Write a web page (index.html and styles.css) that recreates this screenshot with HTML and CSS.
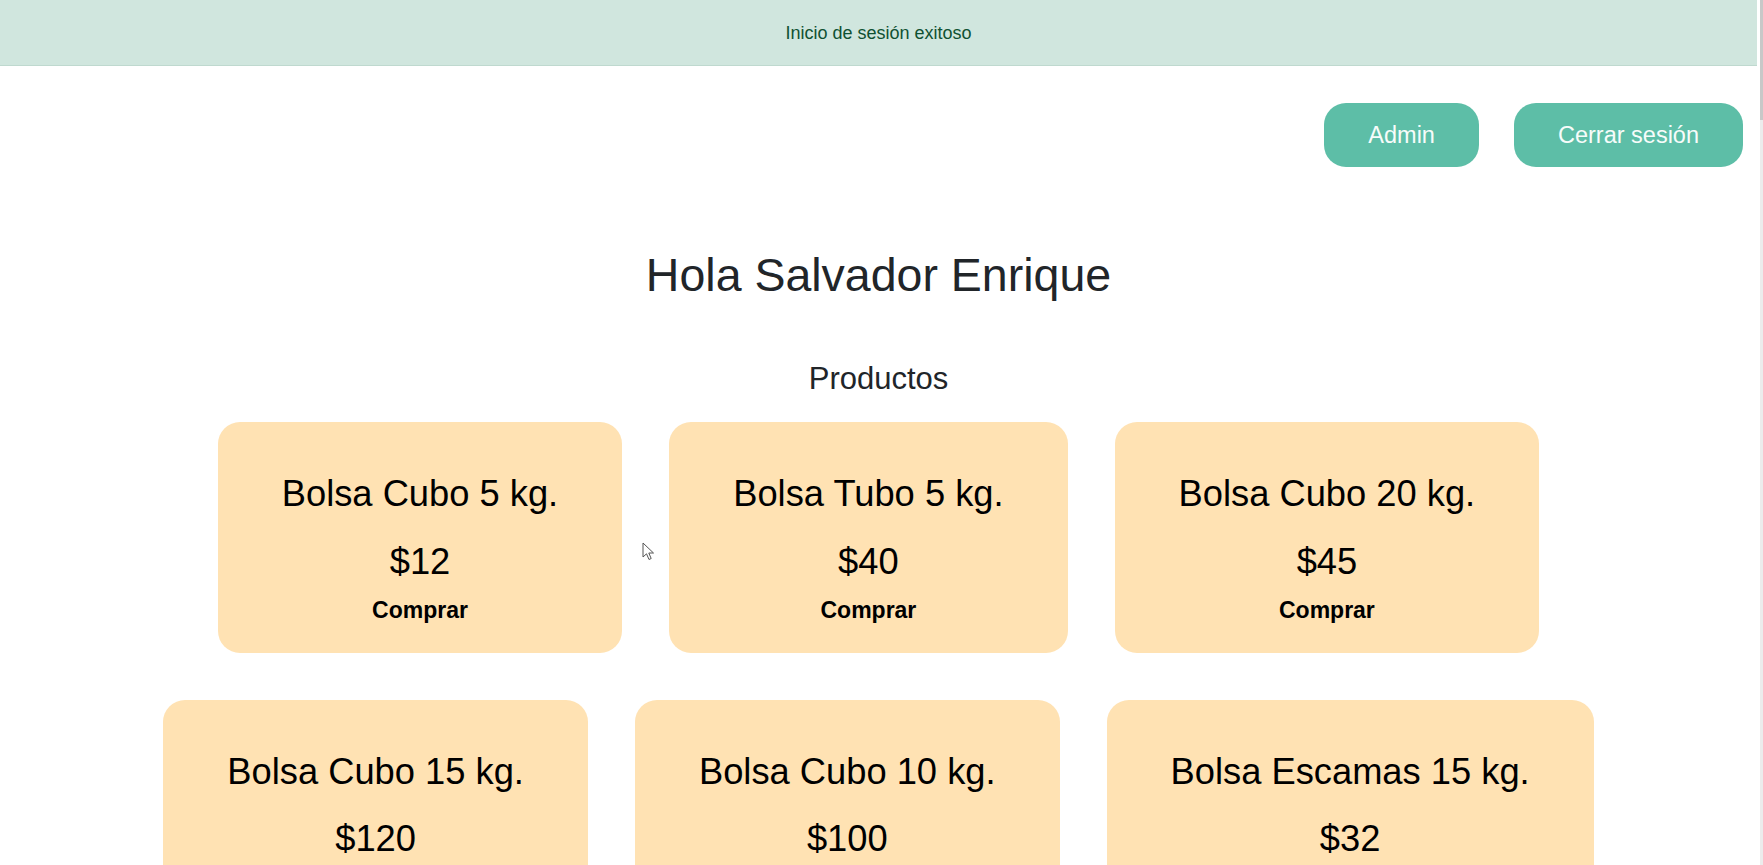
FILE: index.html
```html
<!DOCTYPE html>
<html lang="es">
<head>
<meta charset="utf-8">
<title>Productos</title>
<link rel="stylesheet" href="styles.css">
</head>
<body>
<div class="page">
  <div class="alert">Inicio de sesión exitoso</div>
  <div class="topbar">
    <button class="pill">Admin</button>
    <button class="pill">Cerrar sesión</button>
  </div>
  <h1 class="greeting">Hola Salvador Enrique</h1>
  <h2 class="section">Productos</h2>
  <div class="cards">
    <div class="card"><h3 class="card-title">Bolsa Cubo 5 kg.</h3><p class="price">$12</p><button class="buy">Comprar</button></div>
    <div class="card"><h3 class="card-title">Bolsa Tubo 5 kg.</h3><p class="price">$40</p><button class="buy">Comprar</button></div>
    <div class="card"><h3 class="card-title">Bolsa Cubo 20 kg.</h3><p class="price">$45</p><button class="buy">Comprar</button></div>
    <div class="card"><h3 class="card-title">Bolsa Cubo 15 kg.</h3><p class="price">$120</p><button class="buy">Comprar</button></div>
    <div class="card"><h3 class="card-title">Bolsa Cubo 10 kg.</h3><p class="price">$100</p><button class="buy">Comprar</button></div>
    <div class="card"><h3 class="card-title">Bolsa Escamas 15 kg.</h3><p class="price">$32</p><button class="buy">Comprar</button></div>
  </div>
</div>
<div class="scrollbar"><div class="thumb"></div></div>
<svg class="cursor" width="13" height="19" viewBox="0 0 13 19"><path d="M1 1 L1 15 L4.5 11.8 L7 17.5 L9.2 16.5 L6.8 11 L11.5 11 Z" fill="#fff" stroke="#555" stroke-width="1" stroke-linejoin="round"/></svg>
</body>
</html>
```

FILE: styles.css
```css
html, body {
  margin: 0;
  padding: 0;
  height: 100%;
  overflow: hidden;
  background: #ffffff;
}
body {
  font-family: "Liberation Sans", Arial, sans-serif;
  color: #212529;
}
.page {
  margin-right: 6px;
}
.alert {
  height: 66px;
  padding-top: 2px;
  box-sizing: border-box;
  display: flex;
  align-items: center;
  justify-content: center;
  background: #d0e6de;
  border-bottom: 1px solid #bfd9cf;
  color: #0f5132;
  font-size: 18px;
  line-height: 1.2;
}
.topbar {
  display: flex;
  justify-content: flex-end;
  gap: 35px;
  padding: 37px 14px 0 0;
}
.pill {
  height: 64px;
  padding: 0 44px;
  border: none;
  border-radius: 22px;
  background: #5dbea7;
  color: #f7fcfa;
  font-family: "Liberation Sans", Arial, sans-serif;
  font-size: 23.5px;
  cursor: pointer;
}
.greeting {
  margin: 81px 0 0;
  text-align: center;
  font-size: 46.5px;
  font-weight: 400;
  line-height: 1.2;
  color: #212529;
}
.section {
  margin: 56px 0 0;
  text-align: center;
  font-size: 31px;
  font-weight: 400;
  line-height: 1.2;
  color: #212529;
}
.cards {
  display: flex;
  flex-wrap: wrap;
  justify-content: center;
  gap: 47px;
  margin-top: 25px;
}
.card {
  display: flex;
  flex-direction: column;
  align-items: center;
  padding: 50px 64px 28px;
  background: #ffe2b3;
  border-radius: 22px;
  color: #000;
}
.card-title {
  margin: 0;
  font-size: 36.3px;
  font-weight: 400;
  line-height: 1.2;
  white-space: nowrap;
}
.price {
  margin: 24px 0 0;
  font-size: 36.3px;
  line-height: 1.2;
}
.buy {
  margin-top: 14px;
  padding: 0;
  border: none;
  background: transparent;
  font-family: "Liberation Sans", Arial, sans-serif;
  font-size: 23px;
  font-weight: 700;
  line-height: 1.2;
  color: #000;
  cursor: pointer;
}
.scrollbar {
  position: fixed;
  top: 0;
  right: 0;
  width: 3px;
  height: 100%;
  background: #ececec;
}
.thumb {
  height: 120px;
  background: #c8c8c8;
}
.cursor {
  position: absolute;
  left: 642px;
  top: 542px;
}
```
